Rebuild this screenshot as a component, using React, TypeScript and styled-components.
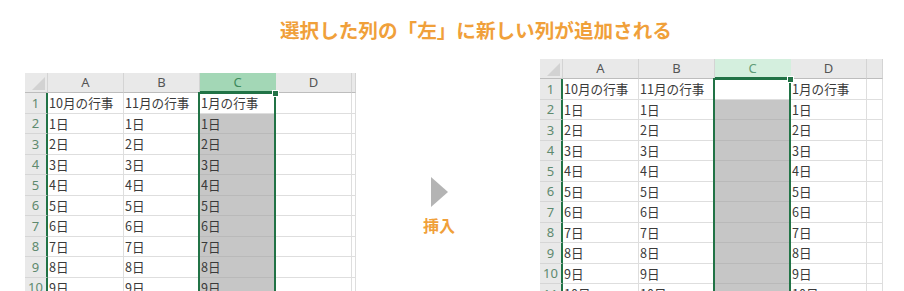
import React from "react";
import styled, { createGlobalStyle } from "styled-components";

const GlobalStyle = createGlobalStyle`
  html, body { margin: 0; padding: 0; background: #ffffff; }
  body { width: 904px; height: 291px; overflow: hidden; }
`;

const ORANGE = "#F0A03A";
const GREEN = "#217346";
const ROW_HEAD_W = 23;
const COL_W = 76;
const HEAD_H = 20;
const ROW_H = 20.5;

const Page = styled.div`
  width: 904px;
  height: 291px;
  overflow: hidden;
  display: flex;
  flex-direction: column;
  font-family: "Noto Sans CJK JP", "Noto Sans", sans-serif;
`;

const Title = styled.h1`
  margin: 0;
  height: 59px;
  box-sizing: border-box;
  padding: 19px 0 0 280px;
  font-size: 19.6px;
  line-height: 22px;
  font-weight: 700;
  color: ${ORANGE};
  white-space: nowrap;
`;

const Stage = styled.div`
  display: flex;
  align-items: flex-start;
  flex: 1;
  min-height: 0;
`;

const SheetFrame = styled.div<{ $x: number; $y: number; $w: number }>`
  position: relative;
  overflow: hidden;
  margin-left: ${(p) => p.$x}px;
  margin-top: ${(p) => p.$y}px;
  width: ${(p) => p.$w}px;
  height: calc(232px - ${(p) => p.$y}px);
  flex: none;
`;

const Grid = styled.div<{ $extra: number }>`
  display: grid;
  grid-template-columns: ${ROW_HEAD_W}px repeat(4, ${COL_W}px) ${(p) => p.$extra}px;
  grid-template-rows: ${HEAD_H}px;
  grid-auto-rows: ${ROW_H}px;
  font-size: 12.6px;
  color: #333;
`;

const Corner = styled.div`
  position: relative;
  background: #e9e9e9;
  border-right: 1px solid #d4d4d4;
  border-bottom: 1px solid #bdbdbd;
  box-sizing: border-box;
  &::after {
    content: "";
    position: absolute;
    right: 2px;
    bottom: 2px;
    width: 0;
    height: 0;
    border-left: 13px solid transparent;
    border-bottom: 13px solid #d2d2d2;
  }
`;

const ColHead = styled.div<{ $sel?: "strong" | "light" }>`
  box-sizing: border-box;
  display: flex;
  align-items: center;
  justify-content: center;
  background: ${(p) =>
    p.$sel === "strong" ? "#a3d7b6" : p.$sel === "light" ? "#d4efde" : "#e9e9e9"};
  color: ${(p) =>
    p.$sel === "strong" ? "#3d8a5c" : p.$sel === "light" ? "#5f9b77" : "#555555"};
  border-right: 1px solid ${(p) => (p.$sel ? "transparent" : "#d4d4d4")};
  border-bottom: ${(p) => (p.$sel ? `2px solid ${GREEN}` : "1px solid #bdbdbd")};
  font-size: 13px;
  line-height: 1;
  font-family: "Noto Sans", "Noto Sans CJK JP", sans-serif;
`;

const RowHead = styled.div`
  box-sizing: border-box;
  display: flex;
  align-items: center;
  justify-content: center;
  background: #e9e9e9;
  color: #5e8a6e;
  border-right: 2px solid ${GREEN};
  border-bottom: 1px solid #d6d6d6;
  font-size: 13px;
  font-family: "Noto Sans", "Noto Sans CJK JP", sans-serif;
`;

const Cell = styled.div<{ $shade?: boolean }>`
  box-sizing: border-box;
  display: flex;
  align-items: center;
  padding-left: 1px;
  white-space: nowrap;
  overflow: hidden;
  background: ${(p) => (p.$shade ? "#c6c6c6" : "#ffffff")};
  border-right: 1px solid #dedede;
  border-bottom: 1px solid ${(p) => (p.$shade ? "#b9b9b9" : "#dedede")};
  color: #3a3a3a;
`;

const Selection = styled.div`
  position: absolute;
  left: ${ROW_HEAD_W + COL_W * 2 - 2}px;
  top: ${HEAD_H - 1}px;
  width: ${COL_W + 2}px;
  bottom: -4px;
  border: 2px solid ${GREEN};
  border-bottom: none;
  box-sizing: border-box;
  pointer-events: none;
`;

const FillHandle = styled.div`
  position: absolute;
  left: ${ROW_HEAD_W + COL_W * 3 - 4}px;
  top: ${HEAD_H - 3}px;
  width: 5px;
  height: 5px;
  background: ${GREEN};
  border: 1px solid #ffffff;
`;

const ArrowCol = styled.div`
  flex: none;
  width: 32px;
  margin-left: 67px;
  margin-top: 118px;
  display: flex;
  flex-direction: column;
  align-items: center;
  gap: 8px;
`;

const Label = styled.div`
  font-size: 16px;
  line-height: 20px;
  font-weight: 700;
  color: ${ORANGE};
  white-space: nowrap;
`;

type SheetProps = {
  x: number;
  y: number;
  extra: number;
  headSel: "strong" | "light";
  rows: string[][];
};

const Sheet: React.FC<SheetProps> = ({ x, y, extra, headSel, rows }) => (
  <SheetFrame $x={x} $y={y} $w={ROW_HEAD_W + COL_W * 4 + extra}>
    <Grid $extra={extra}>
      <Corner />
      {["A", "B", "C", "D"].map((l) => (
        <ColHead key={l} $sel={l === "C" ? headSel : undefined}>
          {l}
        </ColHead>
      ))}
      <ColHead />
      {rows.map((r, i) => (
        <React.Fragment key={i}>
          <RowHead>{i + 1}</RowHead>
          {r.map((v, j) => (
            <Cell key={j} $shade={j === 2 && i > 0}>
              {v}
            </Cell>
          ))}
          <Cell />
        </React.Fragment>
      ))}
    </Grid>
    <Selection />
    <FillHandle />
  </SheetFrame>
);

const N = 11;
const leftRows: string[][] = [["10月の行事", "11月の行事", "1月の行事", ""]];
const rightRows: string[][] = [["10月の行事", "11月の行事", "", "1月の行事"]];
for (let n = 1; n < N; n++) {
  leftRows.push([`${n}日`, `${n}日`, `${n}日`, ""]);
  rightRows.push([`${n}日`, `${n}日`, "", `${n}日`]);
}

export default function App() {
  return (
    <Page>
      <GlobalStyle />
      <Title>選択した列の「左」に新しい列が追加される</Title>
      <Stage>
        <Sheet x={25} y={14} extra={4} headSel="strong" rows={leftRows} />
        <ArrowCol>
          <svg width="17" height="30" viewBox="0 0 17 30">
            <polygon points="0,0 17,15 0,30" fill="#b4b4b4" />
          </svg>
          <Label>挿入</Label>
        </ArrowCol>
        <Sheet x={85} y={0} extra={16} headSel="light" rows={rightRows} />
      </Stage>
    </Page>
  );
}
